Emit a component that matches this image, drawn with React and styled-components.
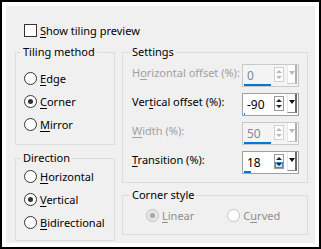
import styled, { createGlobalStyle } from "styled-components";

const GlobalStyle = createGlobalStyle`
  body {
    margin: 0;
    font-family: "Noto Sans", "Open Sans", sans-serif;
    font-size: 11px;
    color: #000;
    white-space: nowrap;
  }
`;

const Frame = styled.div`
  box-sizing: border-box;
  width: 321px;
  height: 249px;
  border: 2px solid #000;
  background: #fff;
  padding: 4px;
`;

const Panel = styled.div`
  box-sizing: border-box;
  height: 100%;
  background: #f0f0f0;
  padding: 16px 7px 0 9px;
`;

const CheckRow = styled.label`
  display: flex;
  align-items: center;
  gap: 3px;
  height: 16px;
  margin: 0 0 6px 9px;
`;

const CheckBox = styled.span`
  box-sizing: border-box;
  width: 13px;
  height: 13px;
  border: 1px solid #333;
  background: #fff;
`;

const Columns = styled.div`
  display: flex;
  gap: 7px;
`;

const Column = styled.div`
  display: flex;
  flex-direction: column;
  gap: ${(p) => p.$gap}px;
  width: ${(p) => p.$width}px;
`;

const Group = styled.fieldset`
  margin: 0;
  min-width: 0;
  border: 1px solid #dcdcdc;
  padding: ${(p) => p.$pad};
`;

const Legend = styled.legend`
  margin-left: ${(p) => p.$indent || 5}px;
  padding: 0 2px;
  line-height: 16px;
  color: #000;
`;

const Stack = styled.div`
  display: flex;
  flex-direction: column;
  gap: ${(p) => p.$gap}px;
  padding-left: ${(p) => p.$indent}px;
`;

const RadioRow = styled.div`
  display: flex;
  gap: 33px;
  padding-left: 23px;
`;

const RadioItem = styled.label`
  display: flex;
  align-items: center;
  gap: 3px;
  height: 21px;
  line-height: 16px;
  color: ${(p) => (p.$disabled ? "#8c8c8c" : "#000")};
`;

const RadioDot = styled.span`
  box-sizing: border-box;
  width: 13px;
  height: 13px;
  border-radius: 50%;
  border: 1px solid ${(p) => (p.$disabled ? "#c4c4c4" : "#333")};
  background: ${(p) => (p.$disabled && p.$checked ? "#e6e6e6" : "#fff")};
  display: flex;
  align-items: center;
  justify-content: center;

  &::after {
    content: "";
    display: ${(p) => (p.$checked ? "block" : "none")};
    width: 5px;
    height: 5px;
    border-radius: 50%;
    background: ${(p) => (p.$disabled ? "#a8a8a8" : "#333")};
  }
`;

const Key = styled.span`
  text-decoration: underline;
  text-underline-offset: 2px;
`;

const SettingRow = styled.div`
  display: flex;
  justify-content: space-between;
  align-items: flex-start;
  height: 23px;
`;

const SettingLabel = styled.span`
  line-height: 16px;
  padding-top: 1px;
  color: ${(p) => (p.$disabled ? "#a0a0a0" : "#000")};
`;

const SpinBox = styled.div`
  box-sizing: border-box;
  display: flex;
  width: 57px;
  height: 23px;
  border: 1px solid ${(p) => (p.$disabled ? "#c8c8c8" : "#a0a0a0")};
  background: ${(p) => (p.$disabled ? "#f4f4f4" : "#fff")};
`;

const Field = styled.div`
  width: 30px;
  display: flex;
  flex-direction: column;
  justify-content: space-between;
`;

const Value = styled.span`
  padding: 3px 0 0 4px;
  line-height: 16px;
  font-size: 12px;
  color: ${(p) => (p.$disabled ? "#7a8a9a" : "#000")};
`;

const Bar = styled.div`
  height: 2px;
  margin: 0 0 0 1px;
  background: #0078d7;
`;

const SpinPair = styled.div`
  box-sizing: border-box;
  display: flex;
  flex-direction: column;
  width: 10px;
  height: 15px;
  margin: 2px 0 0 1px;
  border: 1px solid ${(p) => (p.$disabled ? "#d0d0d0" : "#9a9a9a")};
  background: #fff;
`;

const SpinHalf = styled.div`
  flex: 1;
  display: flex;
  align-items: center;
  justify-content: center;
  background: ${(p) => (p.$hot ? "#cce4f7" : "transparent")};
  outline: ${(p) => (p.$hot ? "1px solid #3c8fd6" : "none")};
  outline-offset: -1px;

  &::after {
    content: "";
    width: 0;
    height: 0;
    border-left: 3px solid transparent;
    border-right: 3px solid transparent;
    ${(p) =>
      p.$up
        ? `border-bottom: 3px solid ${p.$disabled ? "#b8b8b8" : "#222"};`
        : `border-top: 3px solid ${p.$disabled ? "#b8b8b8" : "#222"};`}
  }
`;

const DropButton = styled.div`
  box-sizing: border-box;
  width: 10px;
  height: 19px;
  margin: 0 0 0 3px;
  background: #fff;
  border-left: 1px solid #e8e8e8;
  border-right: 2px solid ${(p) => (p.$disabled ? "#b0b0b0" : "#6a6a6a")};
  border-bottom: 1px solid ${(p) => (p.$disabled ? "#c8c8c8" : "#8a8a8a")};
  display: flex;
  justify-content: center;
  padding-top: 6px;

  &::after {
    content: "";
    width: 0;
    height: 0;
    border-left: 3px solid transparent;
    border-right: 3px solid transparent;
    border-top: 4px solid ${(p) => (p.$disabled ? "#b8b8b8" : "#111")};
  }
`;

function Radio({ checked, disabled, children }) {
  return (
    <RadioItem $disabled={disabled}>
      <RadioDot $checked={checked} $disabled={disabled} />
      <span>{children}</span>
    </RadioItem>
  );
}

function Spinner({ value, fill, disabled, hot }) {
  return (
    <SpinBox $disabled={disabled}>
      <Field>
        <Value $disabled={disabled}>{value}</Value>
        <Bar style={{ width: fill }} />
      </Field>
      <SpinPair $disabled={disabled}>
        <SpinHalf $up $disabled={disabled} />
        <SpinHalf $disabled={disabled} $hot={hot} />
      </SpinPair>
      <DropButton $disabled={disabled} />
    </SpinBox>
  );
}

const settings = [
  { label: <>H<Key>o</Key>rizontal offset (%):</>, value: "0", fill: 27, disabled: true },
  { label: <>Ver<Key>t</Key>ical offset (%):</>, value: "-90", fill: 1 },
  { label: <><Key>W</Key>idth (%):</>, value: "50", fill: 27, disabled: true },
  { label: <><Key>T</Key>ransition (%):</>, value: "18", fill: 7, hot: true },
];

export default function App() {
  return (
    <>
      <GlobalStyle />
      <Frame>
        <Panel>
          <CheckRow>
            <CheckBox />
            <span>
              <Key>S</Key>how tiling preview
            </span>
          </CheckRow>
          <Columns>
            <Column $width={100} $gap={5}>
              <Group $pad="8px 0 9px 0">
                <Legend>Tiling method</Legend>
                <Stack $gap={2} $indent={8}>
                  <Radio><Key>E</Key>dge</Radio>
                  <Radio checked><Key>C</Key>orner</Radio>
                  <Radio><Key>M</Key>irror</Radio>
                </Stack>
              </Group>
              <Group $pad="0 0 7px 0">
                <Legend>Direction</Legend>
                <Stack $gap={2} $indent={8}>
                  <Radio><Key>H</Key>orizontal</Radio>
                  <Radio checked><Key>V</Key>ertical</Radio>
                  <Radio><Key>B</Key>idirectional</Radio>
                </Stack>
              </Group>
            </Column>
            <Column $width={186} $gap={4}>
              <Group $pad="4px 8px 8px 0">
                <Legend $indent={7}>Settings</Legend>
                <Stack $gap={6} $indent={9}>
                  {settings.map((s, i) => (
                    <SettingRow key={i}>
                      <SettingLabel $disabled={s.disabled}>{s.label}</SettingLabel>
                      <Spinner value={s.value} fill={s.fill} disabled={s.disabled} hot={s.hot} />
                    </SettingRow>
                  ))}
                </Stack>
              </Group>
              <Group $pad="2px 0 8px 0">
                <Legend $indent={7}>Corner style</Legend>
                <RadioRow>
                  <Radio checked disabled><Key>L</Key>inear</Radio>
                  <Radio disabled>C<Key>u</Key>rved</Radio>
                </RadioRow>
              </Group>
            </Column>
          </Columns>
        </Panel>
      </Frame>
    </>
  );
}
